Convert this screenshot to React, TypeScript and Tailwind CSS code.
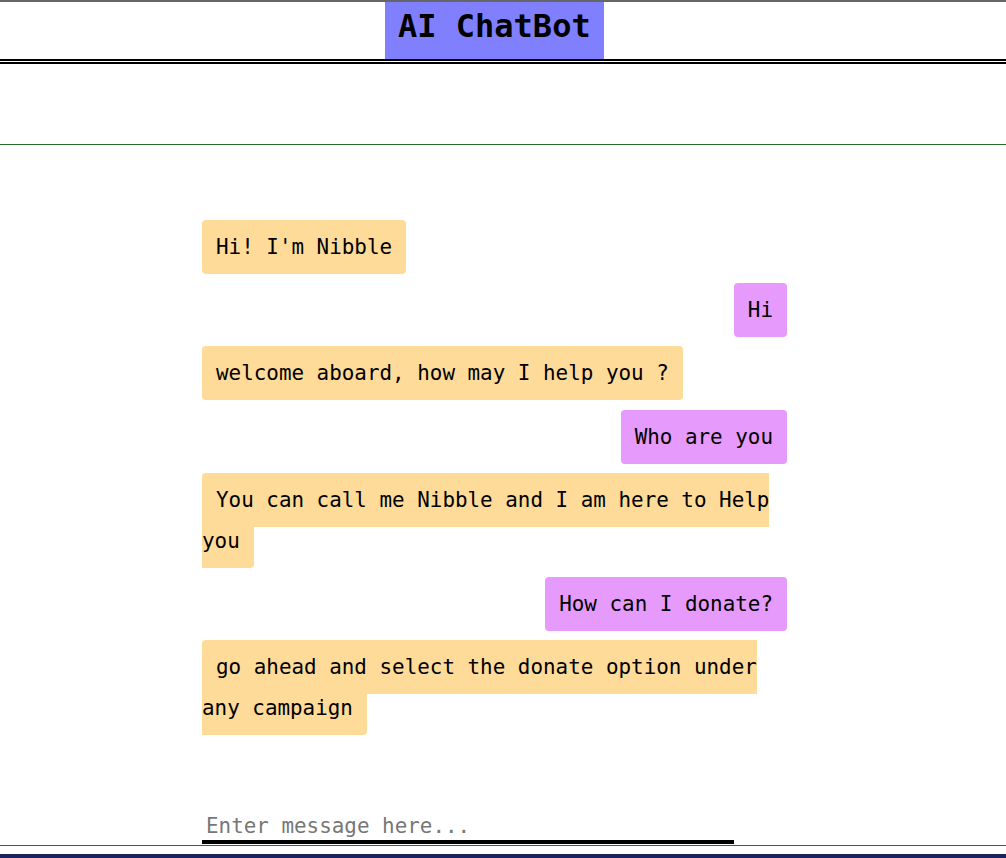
import React from "react";

type Msg = { from: "bot" | "user"; text: string };

const messages: Msg[] = [
  { from: "bot", text: "Hi! I'm Nibble" },
  { from: "user", text: "Hi" },
  { from: "bot", text: "welcome aboard, how may I help you ?" },
  { from: "user", text: "Who are you" },
  { from: "bot", text: "You can call me Nibble and I am here to Help you" },
  { from: "user", text: "How can I donate?" },
  { from: "bot", text: "go ahead and select the donate option under any campaign" },
];

export default function App() {
  return (
    <div
      className="min-h-[858px] bg-white text-black"
      style={{ fontFamily: '"DejaVu Sans Mono", monospace' }}
    >
      {/* header */}
      <header className="border-t-2 border-[#666666] border-b-[5px] border-b-black [border-bottom-style:double]">
        <div className="pr-[17px] flex justify-center">
          <h1 className="h-[57px] w-[219px] bg-[#8080ff] px-[13px] pt-0 text-[32px] font-bold leading-normal">
            AI ChatBot
          </h1>
        </div>
      </header>

      {/* blank band */}
      <div className="h-[81px] border-b border-[#2b6b2b]" />

      {/* chat */}
      <main className="border-b border-[#2b6b2b]">
        <div className="pr-[17px]">
          <div className="mx-auto w-[585px] pt-[82px]">
            <div className="flex flex-col gap-[22.2px] text-[20.9px] leading-[41px]">
              {messages.map((m, i) => (
                <div key={i} className={m.from === "user" ? "text-right" : "text-left"}>
                  <span
                    className={
                      (m.from === "user" ? "bg-[#e69afb]" : "bg-[#ffdb99]") +
                      " rounded-[4px] px-[14px] py-[15px] [box-decoration-break:slice]"
                    }
                  >
                    {m.text}
                  </span>
                </div>
              ))}
            </div>
            <div className="pt-[79px] pb-[1px]">
              <input
                type="text"
                placeholder="Enter message here..."
                className="block w-[532px] border-b-4 border-black bg-transparent pl-[4px] pt-[6px] pb-[2px] text-[20.9px] leading-[24px] outline-none placeholder:text-[#777777]"
                style={{ fontFamily: '"DejaVu Sans Mono", monospace' }}
              />
            </div>
          </div>
        </div>
      </main>

      <div className="h-[8px]" />
      <footer className="h-[40px] bg-[#172656]" />
    </div>
  );
}
